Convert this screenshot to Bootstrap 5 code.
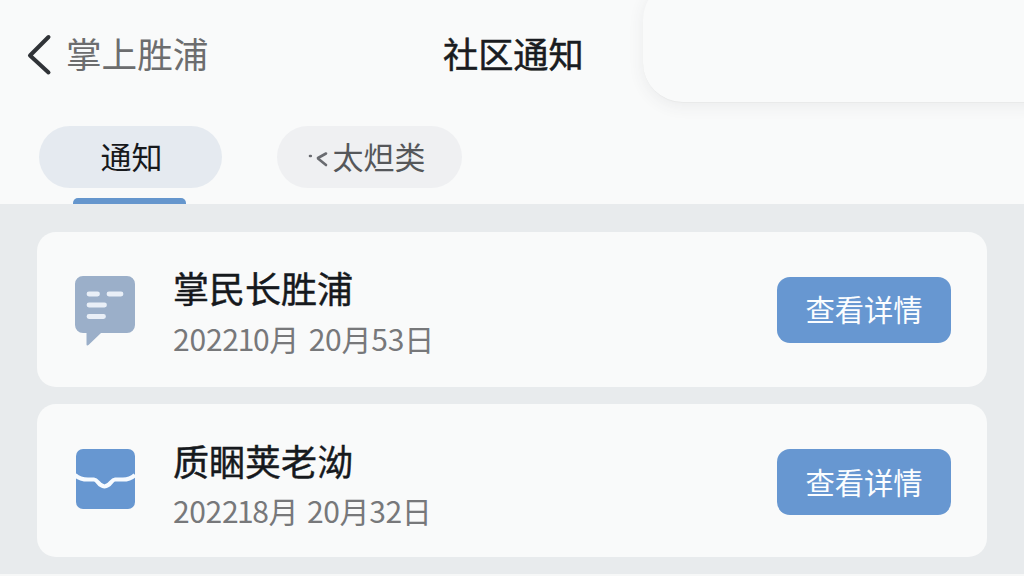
<!DOCTYPE html>
<html lang="zh-CN">
<head>
<meta charset="utf-8">
<meta name="viewport" content="width=device-width, initial-scale=1">
<title>社区通知</title>
<link href="https://cdn.jsdelivr.net/npm/bootstrap@5.3.0/dist/css/bootstrap.min.css" rel="stylesheet">
<style>
body{font-family:"Noto Sans CJK SC",sans-serif;background:#e8ebed;height:576px;overflow:hidden;line-height:1}
.top-area{height:204px;background:#f9fafa}
.title-row{height:110px;padding-left:27px}
.back-link{width:416px;gap:14px;color:#6c6d6e;font-size:35.6px}
.back-link span{padding-bottom:4px}
.page-title{font-size:35.2px;color:#191c21;-webkit-text-stroke:.55px #191c21;padding-bottom:3px}
.float-panel{left:643px;top:-20px;width:420px;height:123px;border-radius:40px;background:#f9fafa;border-bottom:1px solid #e9eaea;box-shadow:0 3px 16px rgba(60,70,80,.08)}
.tab-row{padding:16px 0 0 39px;gap:55px}
.tab-pill{width:183px;height:62px;padding:0 0 3px 2px;border-radius:31px;background:#e5eaf0;color:#17191c;font-size:31px}
.tab-pill.muted-pill{width:185px;padding:0 7px 3px 0;background:#eff0f2;color:#55575a}
.tab-line{width:113px;height:6px;margin:10px 0 0 34px;border-radius:5px 5px 0 0;background:#6596cd}
.notice-list{padding:28px 37px 0;gap:17px}
.notice{height:155px;border:0;border-radius:19px;background:#f9fafa;padding:0 36px 0 37px}
.notice.second{height:153px;padding-top:3px}
.notice-icon{width:62px;height:72px;margin-right:37px;margin-top:2px}
.second .notice-icon{margin-top:-2px}
.notice-title{font-size:36px;color:#16191d;-webkit-text-stroke:.45px #16191d;margin-bottom:14px}
.second .notice-title{margin-bottom:13px}
.notice-date{font-size:30px;color:#77787a;letter-spacing:-.2px;word-spacing:3px}
.second .notice-date{letter-spacing:-.35px;word-spacing:2.5px}
.tight-digit{margin:0 -1.2px}
.btn-detail{width:174px;height:66px;border-radius:13px;background:#6797d1;color:#fbfdff;font-size:29.3px;padding:0 0 1px;line-height:1;border:0}
.bottom-edge{height:2px;background:#f7f8f8}
</style>
</head>
<body class="d-flex flex-column">
<header class="top-area position-relative">
  <div class="title-row d-flex align-items-center">
    <a href="#" class="back-link d-flex align-items-center text-decoration-none">
      <svg width="25" height="42" viewBox="0 0 25 42" fill="none" stroke="#303337" stroke-width="4" stroke-linecap="round" stroke-linejoin="round"><path d="M21.500 3 3 21.500l18.500 17"/></svg>
      <span>掌上胜浦</span>
    </a>
    <h1 class="page-title m-0 fw-normal">社区通知</h1>
  </div>
  <div class="float-panel position-absolute"></div>
  <nav class="tab-row d-flex">
    <div>
      <div class="tab-pill d-flex align-items-center justify-content-center">通知</div>
      <div class="tab-line"></div>
    </div>
    <div class="tab-pill muted-pill d-flex align-items-center justify-content-center"><svg class="me-1" width="22" height="31" viewBox="0 0 22 31" fill="none" stroke="#696b70" stroke-width="2.6" stroke-linecap="round"><path d="M3 16h.8M19 13.500l-8 4.500M11 18.500l8 6.500"/></svg>太炟类</div>
  </nav>
</header>
<main class="notice-list d-flex flex-column flex-grow-1">
  <article class="notice card flex-row align-items-center">
    <svg class="notice-icon" viewBox="0 0 62 72"><path fill="#9bafc9" d="M9 1h44a8 8 0 0 1 8 8v41a8 8 0 0 1-8 8H27L14.500 70c-1 .8-2 .5-2-.8V58H9a8 8 0 0 1-8-8V9a8 8 0 0 1 8-8z"/><path stroke="#e9eff7" stroke-width="4.800" stroke-linecap="round" d="M15 19h8.500M35 19h12M15 30h15.500M15 41.500h14.500"/></svg>
    <div class="flex-grow-1">
      <h2 class="notice-title fw-normal mt-0">掌民长胜浦</h2>
      <div class="notice-date">2022<span class="tight-digit">1</span>0月 20月53日</div>
    </div>
    <button class="btn btn-detail" type="button">查看详情</button>
  </article>
  <article class="notice second card flex-row align-items-center">
    <svg class="notice-icon" viewBox="0 0 62 72"><rect x="2" y="4" width="59" height="60" rx="7" fill="#6797d1"/><path fill="none" stroke="#f7fbff" stroke-width="4.200" d="M1 30q5 4.500 13 4.500h6c4 0 4 6.500 10.500 7 6.500-.5 6.500-7 10.500-7h8q7 0 12-4.500"/></svg>
    <div class="flex-grow-1">
      <h2 class="notice-title fw-normal mt-0">质睏荚老泑</h2>
      <div class="notice-date">2022<span class="tight-digit">1</span>8月 20月32日</div>
    </div>
    <button class="btn btn-detail" type="button">查看详情</button>
  </article>
</main>
<div class="bottom-edge"></div>
<script src="https://cdn.jsdelivr.net/npm/bootstrap@5.3.0/dist/js/bootstrap.bundle.min.js"></script>
</body>
</html>
